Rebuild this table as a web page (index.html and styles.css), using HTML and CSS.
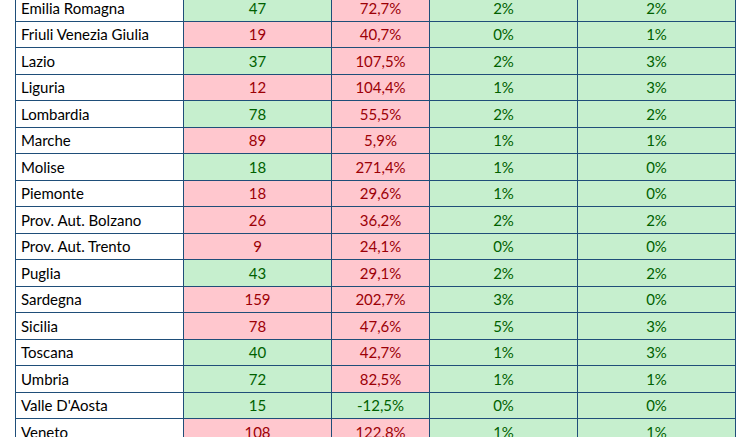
FILE: index.html
```html
<!DOCTYPE html>
<html lang="it">
<head>
<meta charset="utf-8">
<title>Regioni</title>
<link rel="stylesheet" href="styles.css">
</head>
<body>
<div class="sheet">
  <div class="c name">Emilia Romagna</div><div class="c g">47</div><div class="c r">72,7%</div><div class="c g">2%</div><div class="c g">2%</div>
  <div class="c name">Friuli Venezia Giulia</div><div class="c r">19</div><div class="c r">40,7%</div><div class="c g">0%</div><div class="c g">1%</div>
  <div class="c name">Lazio</div><div class="c g">37</div><div class="c r">107,5%</div><div class="c g">2%</div><div class="c g">3%</div>
  <div class="c name">Liguria</div><div class="c r">12</div><div class="c r">104,4%</div><div class="c g">1%</div><div class="c g">3%</div>
  <div class="c name">Lombardia</div><div class="c g">78</div><div class="c r">55,5%</div><div class="c g">2%</div><div class="c g">2%</div>
  <div class="c name">Marche</div><div class="c r">89</div><div class="c r">5,9%</div><div class="c g">1%</div><div class="c g">1%</div>
  <div class="c name">Molise</div><div class="c g">18</div><div class="c r">271,4%</div><div class="c g">1%</div><div class="c g">0%</div>
  <div class="c name">Piemonte</div><div class="c r">18</div><div class="c r">29,6%</div><div class="c g">1%</div><div class="c g">0%</div>
  <div class="c name">Prov. Aut. Bolzano</div><div class="c r">26</div><div class="c r">36,2%</div><div class="c g">2%</div><div class="c g">2%</div>
  <div class="c name">Prov. Aut. Trento</div><div class="c r">9</div><div class="c r">24,1%</div><div class="c g">0%</div><div class="c g">0%</div>
  <div class="c name">Puglia</div><div class="c g">43</div><div class="c r">29,1%</div><div class="c g">2%</div><div class="c g">2%</div>
  <div class="c name">Sardegna</div><div class="c r">159</div><div class="c r">202,7%</div><div class="c g">3%</div><div class="c g">0%</div>
  <div class="c name">Sicilia</div><div class="c r">78</div><div class="c r">47,6%</div><div class="c g">5%</div><div class="c g">3%</div>
  <div class="c name">Toscana</div><div class="c g">40</div><div class="c r">42,7%</div><div class="c g">1%</div><div class="c g">3%</div>
  <div class="c name">Umbria</div><div class="c g">72</div><div class="c r">82,5%</div><div class="c g">1%</div><div class="c g">1%</div>
  <div class="c name">Valle D'Aosta</div><div class="c g">15</div><div class="c g">-12,5%</div><div class="c g">0%</div><div class="c g">0%</div>
  <div class="c name">Veneto</div><div class="c r">108</div><div class="c r">122,8%</div><div class="c g">1%</div><div class="c g">1%</div>
</div>
</body>
</html>
```
FILE: styles.css
```css
html, body {
  margin: 0;
  padding: 0;
  background: #ffffff;
  overflow: hidden;
}
body {
  width: 748px;
  height: 437px;
  font-family: Lato, "Liberation Sans", sans-serif;
  font-size: 15px;
}
.sheet {
  margin-left: 15px;
  width: 720px;
  border-left: 1px solid #1f4e79;
  display: grid;
  grid-template-columns: 168px 148px 98px 148px 158px;
  grid-template-rows: 22px repeat(7, 26px 27px) 26px 27px;
}
.c {
  box-sizing: border-box;
  border-right: 1px solid #1f4e79;
  border-bottom: 1px solid #1f4e79;
  display: flex;
  align-items: flex-end;
  justify-content: center;
  padding-bottom: 5px;
  line-height: 1;
  white-space: nowrap;
}
.name {
  justify-content: flex-start;
  padding-left: 5px;
  color: #000000;
  background: #ffffff;
}
.g {
  background: #c6efce;
  color: #006100;
}
.r {
  background: #ffc7ce;
  color: #9c0006;
}
```
